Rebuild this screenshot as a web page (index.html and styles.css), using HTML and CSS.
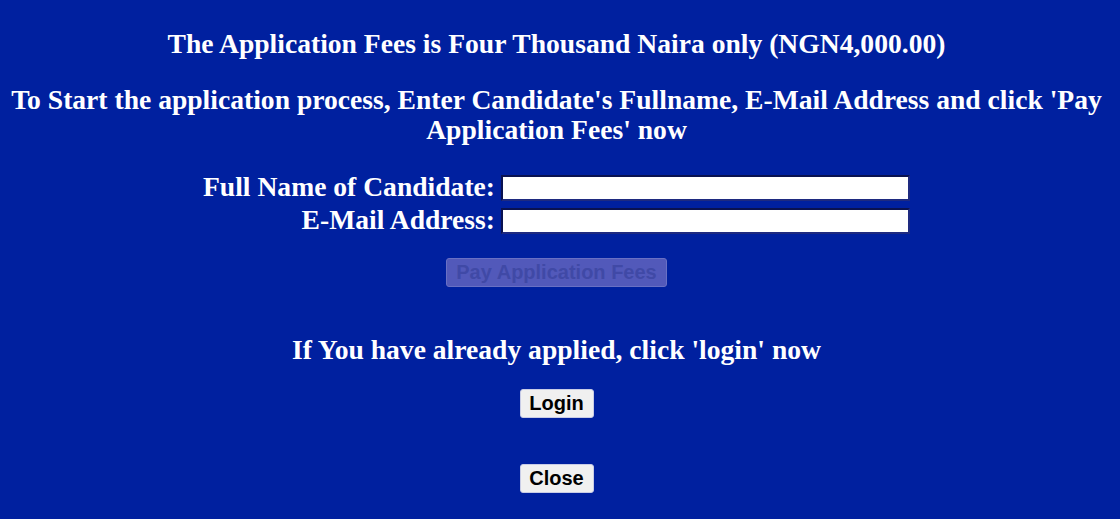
FILE: index.html
```html
<!DOCTYPE html>
<html lang="en">
<head>
    <meta charset="UTF-8">
    <meta name="viewport" content="width=device-width, initial-scale=1.0">
    <title>Application Fees</title>
    <link rel="stylesheet" href="styles.css">
</head>
<body>
    <div class="page">
        <p class="title">The Application Fees is Four Thousand Naira only (NGN4,000.00)</p>
        <p class="intro">To Start the application process, Enter Candidate's Fullname, E-Mail Address and click 'Pay Application Fees' now</p>

        <div class="form">
            <label for="fullname">Full Name of Candidate:</label>
            <input type="text" id="fullname">
            <label for="email">E-Mail Address:</label>
            <input type="text" id="email">
        </div>

        <button class="pay" disabled>Pay Application Fees</button>

        <p class="already">If You have already applied, click 'login' now</p>
        <button class="btn login">Login</button>
        <button class="btn close">Close</button>
    </div>
</body>
</html>
```

FILE: styles.css
```css
body {
    margin: 0;
    padding: 0;
    background-color: #00209f;
    color: #ffffff;
    font-family: "Liberation Serif", "Times New Roman", serif;
    font-weight: bold;
}
.page {
    display: flex;
    flex-direction: column;
    align-items: center;
    text-align: center;
    padding-top: 29px;
    padding-right: 7px;
}
.title {
    font-size: 27.6px;
    line-height: 30px;
    margin: 0;
}
.intro {
    font-size: 27.6px;
    line-height: 30px;
    margin: 26px 4px 0;
}
.form {
    display: grid;
    grid-template-columns: auto 409px;
    column-gap: 6px;
    row-gap: 7px;
    margin-top: 30px;
}
.form label {
    font-size: 27.6px;
    line-height: 23px;
    text-align: right;
}
.form input {
    width: 409px;
    height: 26px;
    box-sizing: border-box;
    margin: 0;
    border: 2px solid #0a1250;
    border-bottom-color: #1e2a80;
    border-right-color: #1e2a80;
    background: #ffffff;
}
.pay {
    margin-top: 24px;
    width: 221px;
    height: 29px;
    font-family: "Liberation Sans", Arial, sans-serif;
    font-weight: bold;
    font-size: 20px;
    background: #5259ba;
    color: #4049a6;
    border: 1px solid #6970c4;
    border-radius: 3px;
    padding: 0;
}
.already {
    font-size: 27.6px;
    line-height: 30px;
    margin: 48px 0 0;
}
.btn {
    width: 74px;
    height: 29px;
    padding: 0;
    font-family: "Liberation Sans", Arial, sans-serif;
    font-weight: bold;
    font-size: 20px;
    color: #000000;
    background: #f0f0f0;
    border: 1px solid #c8cce6;
    border-radius: 3px;
}
.login {
    margin-top: 24px;
}
.close {
    margin-top: 46px;
}
```
